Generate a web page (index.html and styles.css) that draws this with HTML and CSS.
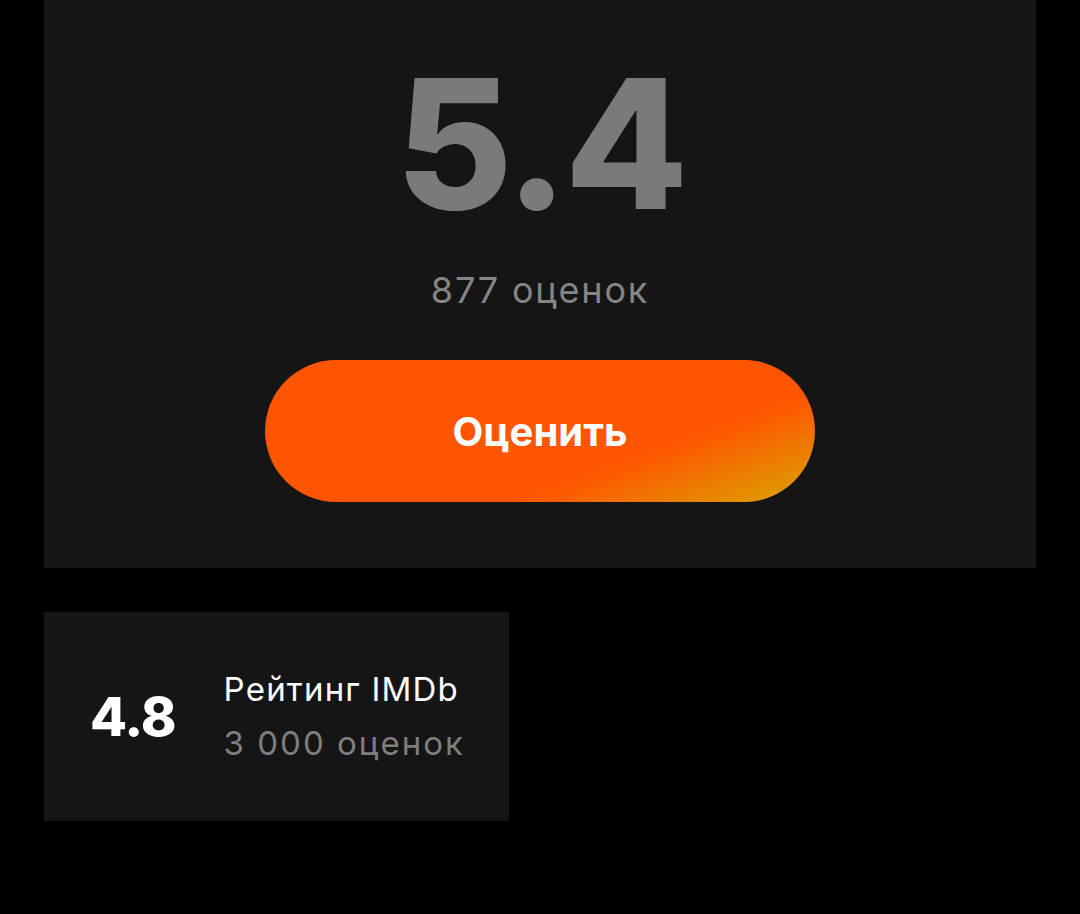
FILE: index.html
```html
<!DOCTYPE html>
<html lang="ru">
<head>
<meta charset="utf-8">
<link rel="stylesheet" href="styles.css">
</head>
<body>
<main class="page">
  <section class="rating-card">
    <div class="rating-value">5.4</div>
    <div class="rating-count">877 оценок</div>
    <button class="rate-btn">Оценить</button>
  </section>
  <section class="imdb-card">
    <div class="imdb-value">4.8</div>
    <div class="imdb-info">
      <div class="imdb-title">Рейтинг IMDb</div>
      <div class="imdb-count">3 000 оценок</div>
    </div>
  </section>
</main>
</body>
</html>
```

FILE: styles.css
```css
html, body {
  margin: 0;
  padding: 0;
  background: #000;
}
body {
  width: 1080px;
  height: 914px;
  overflow: hidden;
  font-family: Inter, "Noto Sans", sans-serif;
}
.page {
  display: flex;
  flex-direction: column;
  padding-left: 44px;
}
.rating-card {
  width: 992px;
  height: 568px;
  box-sizing: border-box;
  background: #151515;
  display: flex;
  flex-direction: column;
  align-items: center;
  padding-top: 54px;
}
.rating-value {
  font-size: 180px;
  line-height: 1;
  font-weight: 800;
  color: #7a7a7a;
  letter-spacing: -4px;
}
.rating-count {
  margin-top: 38px;
  font-size: 36px;
  line-height: 1;
  color: #858585;
  letter-spacing: 1.8px;
}
.rate-btn {
  margin-top: 52px;
  width: 550px;
  height: 142px;
  border: none;
  border-radius: 71px;
  background: linear-gradient(160deg, #ff5500 0%, #ff5500 68%, #d9a600 100%);
  color: #fff;
  font-family: inherit;
  font-size: 40px;
  font-weight: 700;
  padding: 0;
}
.imdb-card {
  margin-top: 44px;
  width: 465px;
  height: 209px;
  box-sizing: border-box;
  background: #151515;
  display: flex;
  align-items: center;
  padding-left: 46px;
  gap: 48px;
}
.imdb-value {
  font-size: 54px;
  font-weight: 800;
  color: #fff;
  line-height: 1;
  letter-spacing: -1px;
}
.imdb-info {
  display: flex;
  flex-direction: column;
  line-height: 54px;
  font-size: 33px;
  margin-top: -2px;
  letter-spacing: 1.2px;
}
.imdb-title {
  color: #fff;
}
.imdb-count {
  color: #7e7e7e;
  letter-spacing: 2px;
}
```
